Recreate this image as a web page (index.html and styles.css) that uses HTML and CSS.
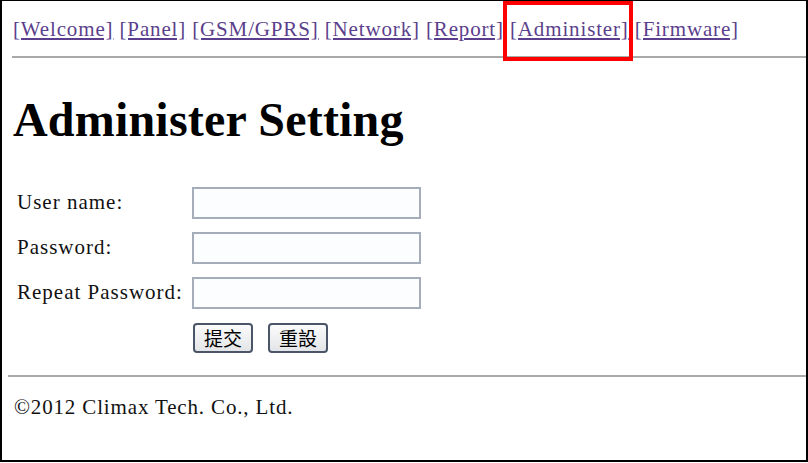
FILE: index.html
```html
<!DOCTYPE html>
<html lang="zh-Hant">
<head>
  <meta charset="UTF-8" />
  <title>Administer Setting</title>
  <link rel="stylesheet" href="styles.css">
</head>
<body>
  <div class="frame">
    <div class="nav">
      <a href="#">[Welcome]</a>
      <a href="#">[Panel]</a>
      <a href="#">[GSM/GPRS]</a>
      <a href="#">[Network]</a>
      <a href="#">[Report]</a>
      <a href="#" class="current">[Administer]</a>
      <a href="#">[Firmware]</a>
    </div>
    <hr class="rule top-rule" />

    <h1>Administer Setting</h1>

    <form class="form">
      <div class="row">
        <label>User name:</label>
        <input type="text" />
      </div>
      <div class="row">
        <label>Password:</label>
        <input type="password" />
      </div>
      <div class="row">
        <label>Repeat Password:</label>
        <input type="password" />
      </div>
      <div class="row button-row">
        <span class="spacer"></span>
        <div class="buttons">
          <button type="button" class="btn">提交</button>
          <button type="reset" class="btn">重設</button>
        </div>
      </div>
    </form>

    <hr class="rule bottom-rule" />
    <div class="footer">©2012 Climax Tech. Co., Ltd.</div>
  </div>
</body>
</html>
```

FILE: styles.css
```css
html, body {
  margin: 0;
  padding: 0;
  background: #fff;
}

.frame {
  box-sizing: border-box;
  width: 808px;
  height: 462px;
  border: 2px solid #000;
  border-top-width: 1px;
  font-family: "Liberation Serif", "Noto Sans CJK TC", serif;
  color: #111;
  overflow: hidden;
}

.nav {
  padding: 13px 0 0 11px;
  font-size: 21px;
  line-height: 30px;
  height: 32px;
  letter-spacing: 0.85px;
  white-space: nowrap;
}

.nav a {
  color: #5b3f8c;
  text-decoration: underline;
}

/* highlight box drawn round the current page link */
.nav a.current {
  outline: 4px solid #f00;
  padding: 12px 0 16px 3px;
  margin-left: -3px;
}

.rule {
  border: none;
  height: 2px;
  background: #a9a9a9;
  margin: 0;
}

.top-rule {
  margin: 10px 0 0 10px;
}

h1 {
  font-size: 48px;
  font-weight: bold;
  margin: 37px 0 0 11px;
  line-height: 50px;
  letter-spacing: 0.2px;
  color: #000;
}

.form {
  margin: 35px 0 0 15px;
}

.row {
  display: flex;
  align-items: center;
  height: 45px;
}

.row label {
  width: 175px;
  font-size: 21px;
  letter-spacing: 1px;
}

.row input {
  box-sizing: border-box;
  width: 229px;
  height: 32px;
  border: 2px solid #a5adba;
  background: #fbfdff;
  padding: 0 4px;
}

.spacer {
  width: 176px;
}

.button-row {
  align-items: flex-start;
  padding-top: 8px;
}

.buttons {
  display: flex;
  gap: 15px;
}

.btn {
  box-sizing: border-box;
  width: 60px;
  height: 30px;
  font-family: "Noto Sans CJK TC", sans-serif;
  font-size: 19px;
  line-height: 22px;
  padding: 0;
  color: #000;
  border: 2px solid #4a5668;
  border-radius: 4px;
  background: linear-gradient(#fbfbfb, #e3e5e8);
}

.bottom-rule {
  margin: 7px 0 0 6px;
}

.footer {
  padding: 18px 0 0 12px;
  font-size: 21px;
  letter-spacing: 0.85px;
}
```
